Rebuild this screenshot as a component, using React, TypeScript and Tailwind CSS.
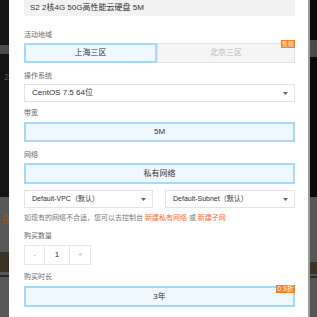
import React from "react";

const font = { fontFamily: '"Liberation Sans", "Noto Sans CJK SC", sans-serif' };

function Label({ children, mt }: { children: React.ReactNode; mt: string }) {
  return <div className={`${mt} h-[9px] text-[7px] leading-[9px] text-[#666]`}>{children}</div>;
}

function Arrow() {
  return (
    <svg width="5" height="3" viewBox="0 0 5 3" className="shrink-0">
      <path d="M0 0 L5 0 L2.5 3 Z" fill="#666" />
    </svg>
  );
}

export default function App() {
  return (
    <div className="flex w-[317px] h-[317px] overflow-hidden bg-white" style={font}>
      {/* left backdrop strip */}
      <div className="w-[9px] shrink-0 flex flex-col">
        <div className="h-[45px] bg-[#161616]" />
        <div className="h-[9px] bg-[#4b4b4b]" />
        <div className="h-[143px] bg-[#141414] flex flex-col items-end pt-[18px] text-[9px] leading-[10px] text-[#555]">
          <span>2</span>
        </div>
        <div className="flex-1 bg-[#585858] flex flex-col">
          <div className="mt-[18px] h-[11px] text-[12px] leading-[11px] text-[#a0521c] text-right">9</div>
          <div className="h-[26px]" />
          <div className="h-[20px] bg-[#3a3222]" />
          <div className="mt-[3px] h-[2px] bg-[#2a2a2a]" />
        </div>
      </div>

      {/* modal panel */}
      <div className="w-[299px] shrink-0 bg-white pl-[15px] pr-[13px] flex flex-col">
        <div className="h-[16px] bg-[#f2f2f2] flex items-center pl-[6px] text-[8px] text-[#333]">
          S2 2核4G 50G高性能云硬盘 5M
        </div>

        <Label mt="mt-[14px]">活动地域</Label>
        <div className="mt-[4px] flex h-[20px]">
          <div className="w-[133px] border-2 border-[#a3d9fb] bg-[#f0f8ff] flex items-center justify-center text-[8px] text-[#333]">
            上海三区
          </div>
          <div className="relative flex-1 border border-[#e4e4e4] bg-[#f5f5f5] flex items-center justify-center text-[8px] text-[#bbb]">
            北京三区
            <div className="absolute right-[-1px] top-[-4px] h-[8px] px-[1px] bg-[#ff7d1a] text-white text-[6px] leading-[8px]">
              售罄
            </div>
          </div>
        </div>

        <Label mt="mt-[8px]">操作系统</Label>
        <div className="mt-[4px] h-[18px] border border-[#e4e4e4] flex items-center justify-between pl-[7px] pr-[6px] text-[8px] text-[#333]">
          <span>CentOS 7.5 64位</span>
          <Arrow />
        </div>

        <Label mt="mt-[6px]">带宽</Label>
        <div className="mt-[5px] h-[20px] border-2 border-[#a3d9fb] bg-[#f0f8ff] flex items-center justify-center text-[8px] text-[#333]">
          5M
        </div>

        <Label mt="mt-[8px]">网络</Label>
        <div className="mt-[4px] h-[21px] border-2 border-[#a3d9fb] bg-[#f0f8ff] flex items-center justify-center text-[8px] text-[#333]">
          私有网络
        </div>

        <div className="mt-[6px] flex justify-between h-[18px]">
          <div className="w-[129px] border border-[#e4e4e4] flex items-center justify-between pl-[7px] pr-[6px] text-[7px] text-[#333]">
            <span>Default-VPC（默认）</span>
            <Arrow />
          </div>
          <div className="w-[130px] border border-[#e4e4e4] flex items-center justify-between pl-[7px] pr-[6px] text-[7px] text-[#333]">
            <span>Default-Subnet（默认）</span>
            <Arrow />
          </div>
        </div>

        <div className="mt-[5px] h-[9px] text-[7px] leading-[9px] text-[#777] whitespace-nowrap">
          如现有的网络不合适，您可以去控制台 <span className="text-[#ff6a33]">新建私有网络</span> 或{" "}
          <span className="text-[#ff6a33]">新建子网</span>
        </div>

        <Label mt="mt-[9px]">购买数量</Label>
        <div className="mt-[5px] h-[20px] flex w-[67px] border border-[#e8e8e8]">
          <div className="w-[20px] flex items-center justify-center text-[8px] text-[#bbb] border-r border-[#e8e8e8]">-</div>
          <div className="flex-1 flex items-center justify-center text-[8px] text-[#333] border-r border-[#e8e8e8]">1</div>
          <div className="w-[20px] flex items-center justify-center text-[8px] text-[#bbb]">+</div>
        </div>

        <Label mt="mt-[7px]">购买时长</Label>
        <div className="relative mt-[5px] h-[21px] border-2 border-[#a3d9fb] bg-[#f0f8ff] flex items-center justify-center text-[8px] text-[#333]">
          3年
          <div className="absolute right-[-2px] top-[-3px] h-[8px] px-[1px] bg-[#ff7d1a] text-white text-[7px] leading-[8px]">
            0.9折
          </div>
        </div>
      </div>

      {/* right backdrop strip */}
      <div className="flex-1 flex flex-col border-l-2 border-[#9a9a9a]">
        <div className="h-[40px] bg-[#0a0a0a]" />
        <div className="h-[17px] bg-[#4a4a4a]" />
        <div className="h-[140px] bg-[#0a0a0a]" />
        <div className="flex-1 bg-[#555] flex flex-col">
          <div className="mt-[65px] h-[12px] bg-[#3b3422]" />
          <div className="mt-[2px] h-[2px] bg-[#2e2e2e]" />
        </div>
      </div>
    </div>
  );
}
